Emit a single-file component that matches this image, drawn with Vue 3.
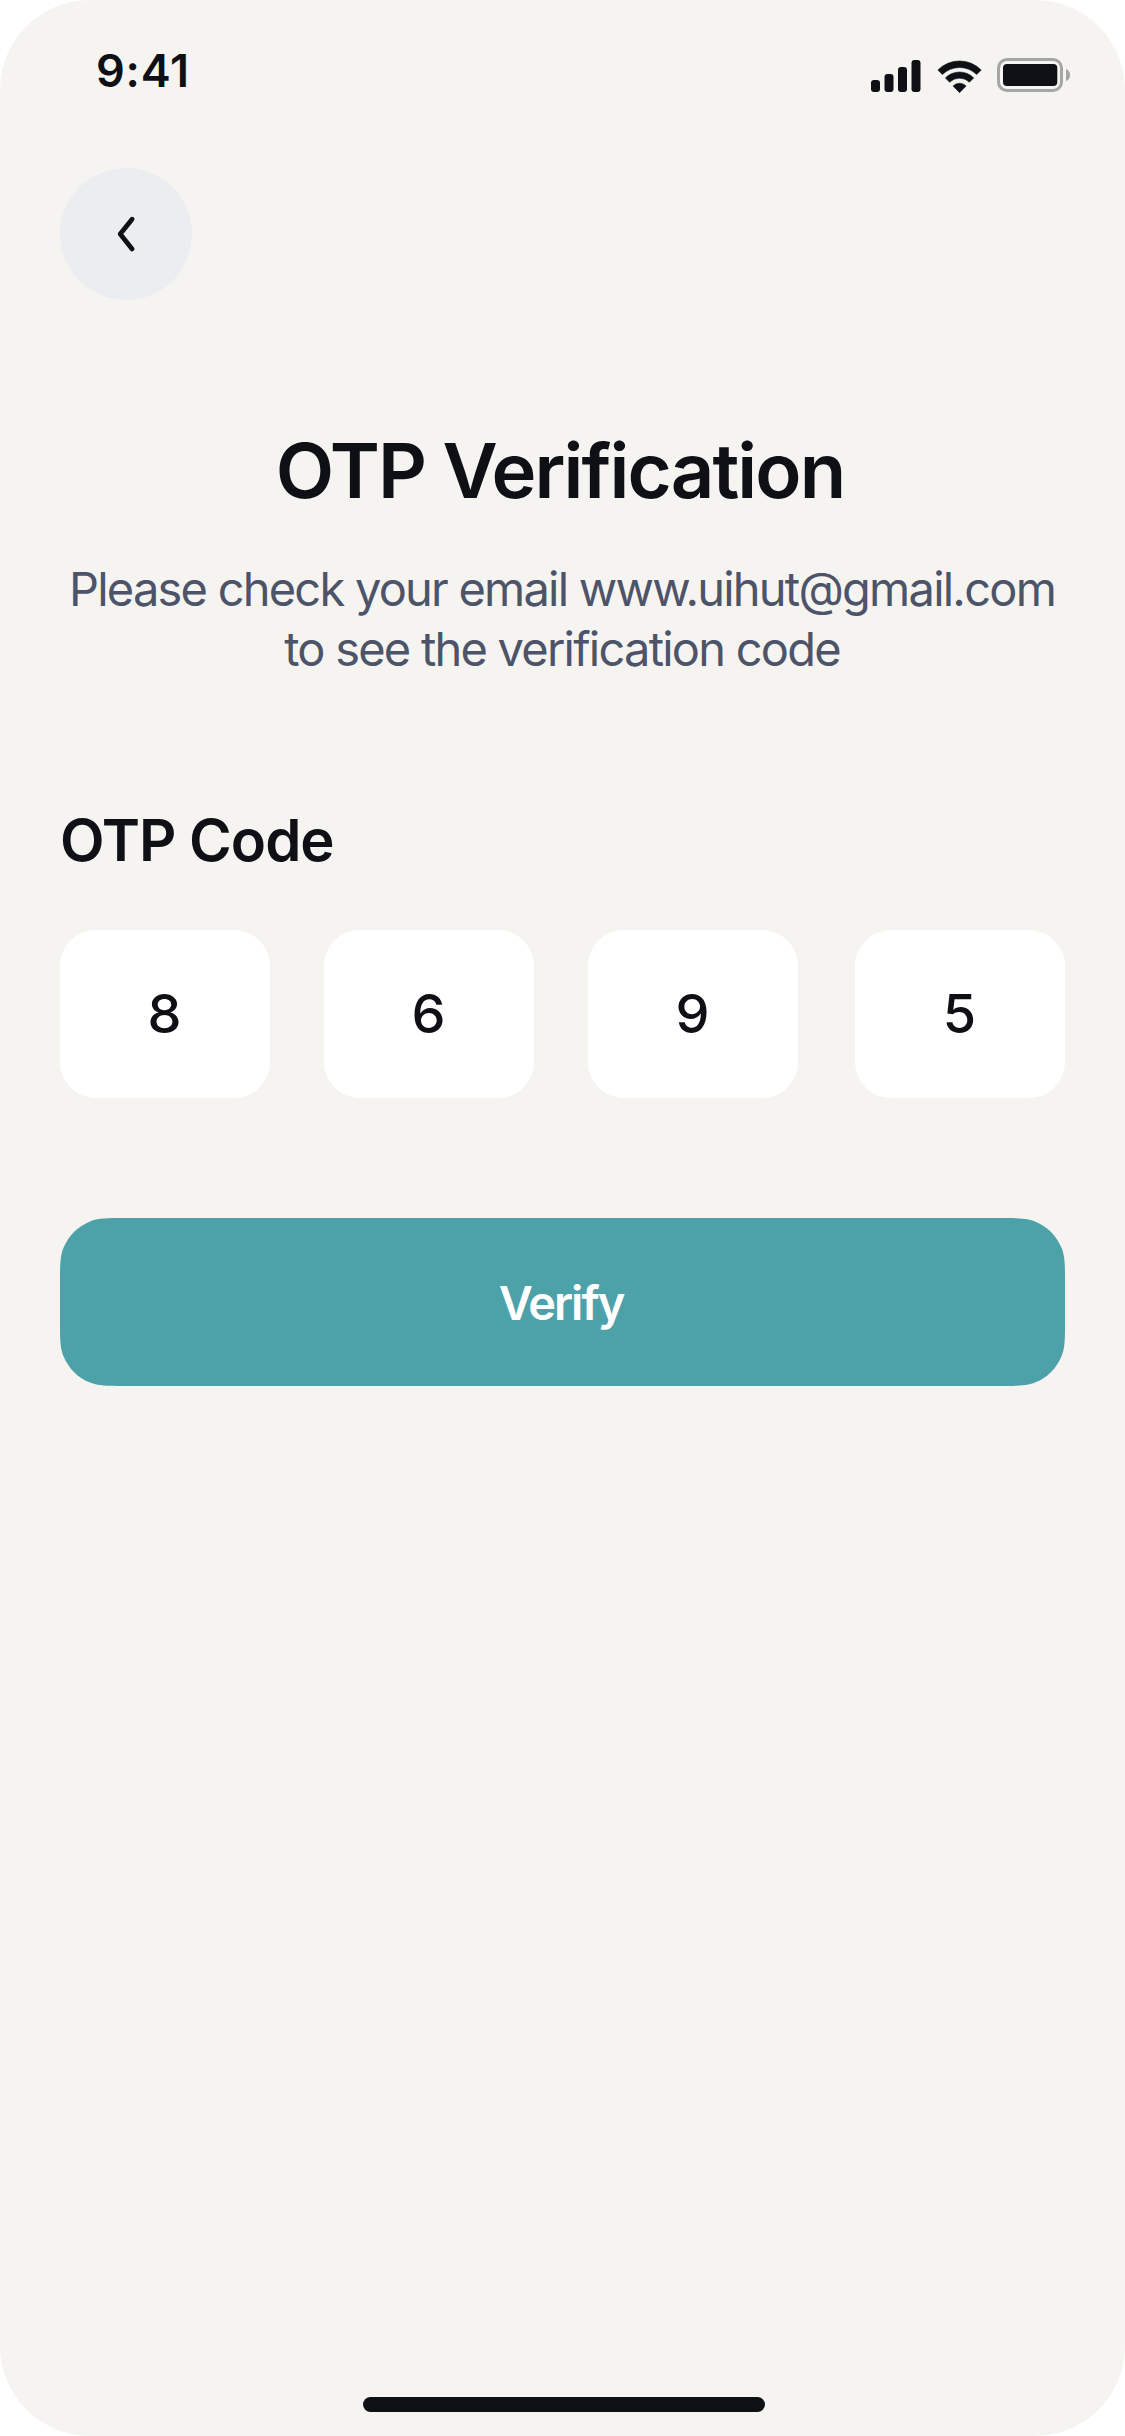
<script setup>
const digits = ['8', '6', '9', '5']
const email = 'www.uihut@gmail.com'
</script>

<template>
  <div class="screen">
    <header class="status">
      <span class="time">9:41</span>
      <svg class="status-icons" width="200" height="36" viewBox="0 0 200 36">
        <g fill="#0e1016">
          <rect x="1" y="22" width="9" height="12" rx="3" />
          <rect x="14.5" y="16" width="9" height="18" rx="3" />
          <rect x="28" y="9" width="9" height="25" rx="3" />
          <rect x="41.5" y="2" width="9" height="32" rx="3" />
        </g>
        <g fill="#0e1016" stroke="#0e1016" stroke-width="0.6" stroke-linejoin="round">
          <path d="M67.9 12A30.4 30.4 0 0 1 111.2 12L106.7 16.5A24.6 24.6 0 0 0 72.4 16.5Z" />
          <path d="M75.4 19.9A20 20 0 0 1 103.7 19.9L99.4 24.2A14 14 0 0 0 79.7 24.2Z" />
          <path d="M83 27.9A9.4 9.4 0 0 1 96.1 27.9L89.55 34.7Z" />
        </g>
        <rect x="128.5" y="1.5" width="63" height="31" rx="8.5" fill="none" stroke="#a5a5a3" stroke-width="3" />
        <rect x="133" y="6" width="54.3" height="22" rx="4" fill="#0e1016" />
        <path d="M196 11v12.2a6.6 6.6 0 0 0 0-12.2z" fill="#a5a5a3" />
      </svg>
    </header>

    <button class="back" aria-label="Back">
      <svg width="132" height="132" viewBox="0 0 132 132">
        <path d="M72.1 51.2L60.2 66L72.1 80.9" fill="none" stroke="#0e1016" stroke-width="4.8" stroke-linecap="round" stroke-linejoin="round" />
      </svg>
    </button>

    <h1>OTP Verification</h1>
    <p class="hint">
      <span>Please check your email {{ email }}</span>
      <span>to see the verification code</span>
    </p>

    <h2>OTP Code</h2>
    <div class="code">
      <span v-for="(d, i) in digits" :key="i" class="digit">{{ d }}</span>
    </div>

    <button class="verify">Verify</button>

    <div class="home"></div>
  </div>
</template>

<style>
body {
  margin: 0;
  background: #fff;
}
</style>

<style scoped>
.screen {
  box-sizing: border-box;
  display: flex;
  flex-direction: column;
  width: 1125px;
  height: 2436px;
  padding: 0 60px 24px;
  border-radius: 90px;
  background: #f5f4f0;
  color: #0e1016;
  font-family: Inter, "Liberation Sans", sans-serif;
  white-space: nowrap;
}
button {
  border: 0;
  padding: 0;
  font: inherit;
}
.status {
  display: flex;
  justify-content: space-between;
  height: 168px;
}
.time {
  margin: 41px 0 0 36px;
  font-size: 45px;
  line-height: 60px;
  font-weight: 600;
  letter-spacing: 0.8px;
}
.status-icons {
  margin: 58px -5px 0 0;
}
.back {
  width: 132px;
  height: 132px;
  border-radius: 50%;
  background: #ecedf1;
}
.back svg {
  display: block;
}
h1 {
  margin: 123px 0 0;
  padding-right: 5px;
  font-size: 76px;
  line-height: 94px;
  font-weight: 600;
  letter-spacing: -1.9px;
  text-align: center;
}
.hint {
  display: flex;
  flex-direction: column;
  align-items: center;
  margin: 42px 0 0;
  padding-right: 1px;
  font-size: 47px;
  line-height: 60px;
  color: #4d546a;
  letter-spacing: -1.77px;
}
h2 {
  margin: 125px 0 0;
  font-size: 58px;
  line-height: 72px;
  font-weight: 600;
  letter-spacing: -1px;
}
.code {
  display: flex;
  gap: 54px;
  margin-top: 54px;
}
.digit {
  box-sizing: border-box;
  display: flex;
  align-items: center;
  justify-content: center;
  width: 210px;
  height: 168px;
  padding: 0 1px 1px 0;
  border-radius: 36px;
  background: #fff;
  font-size: 54px;
  font-weight: 500;
}
.digit:last-child {
  margin-left: 3px;
}
.verify {
  width: 1005px;
  height: 168px;
  margin-top: 120px;
  padding: 1px 3px 0 0;
  background: #4da1a9;
  color: #fff;
  font-size: 47px;
  line-height: 60px;
  font-weight: 600;
  letter-spacing: -2px;
  clip-path: path("M58 0H947C963 0 969 1 975 3.4C988 9 996 17 1001.6 30C1004 36 1005 42 1005 58V110C1005 126 1004 132 1001.6 138C996 151 988 159 975 164.6C969 167 963 168 947 168H58C42 168 36 167 30 164.6C17 159 9 151 3.4 138C1 132 0 126 0 110V58C0 42 1 36 3.4 30C9 17 17 9 30 3.4C36 1 42 0 58 0Z");
}
.home {
  width: 402px;
  height: 15px;
  margin: auto 0 0 303px;
  border-radius: 8px;
  background: #0e1016;
}
</style>
